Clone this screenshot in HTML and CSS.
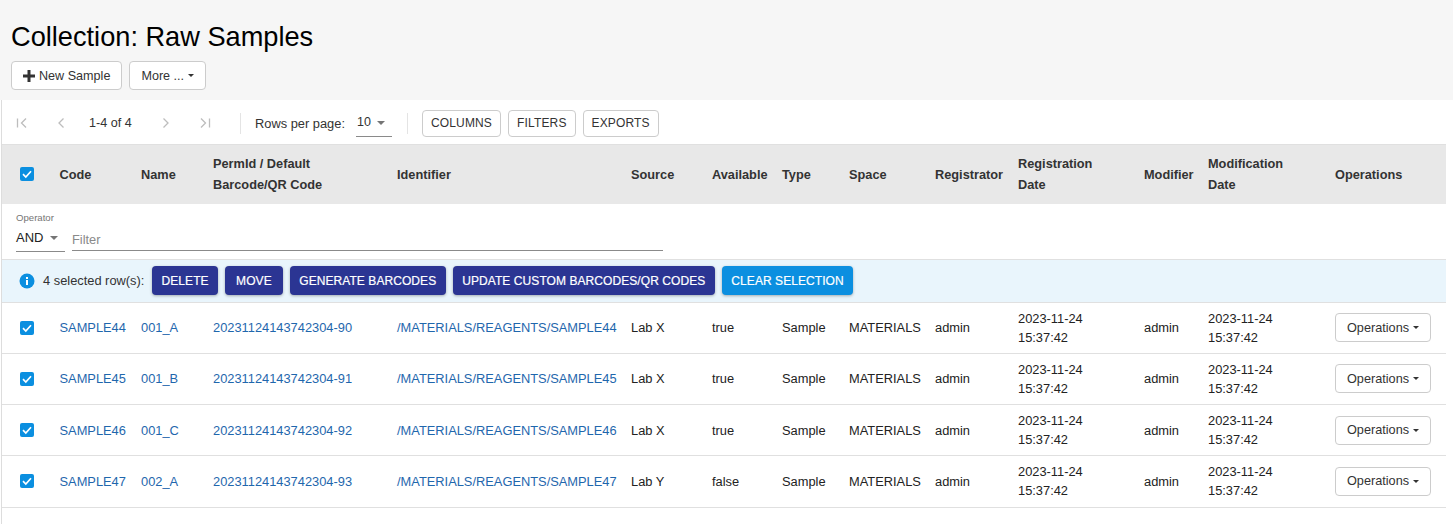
FILE: index.html
```html
<!DOCTYPE html>
<html lang="en">
  <head>
    <meta charset="UTF-8" />
    <title>Collection: Raw Samples</title>
    <link rel="stylesheet" href="styles.css">
  </head>

  <body>
    <!-- Page header -->
    <header class="page-header">
      <h1>Collection: Raw Samples</h1>
      <div class="header-buttons">
        <button class="btn-default"><span class="plus">
          <svg width="12" height="12" viewBox="0 0 12 12"><path d="M4.500 0h3v4.500H12v3H7.500V12h-3V7.500H0v-3h4.500z" fill="#333"/></svg>
        </span>New Sample</button>
        <button class="btn-default">More ...<span class="caret"></span></button>
      </div>
    </header>

    <main class="grid-wrap">
      <!-- Pagination and grid tools -->
      <div class="toolbar">
        <div class="pager">
          <svg class="pager-icon" width="24" height="24" viewBox="0 0 24 24"><path d="M7.500 7.500v9M16 7.500L11.500 12l4.500 4.500" /></svg>
          <svg class="pager-icon" width="24" height="24" viewBox="0 0 24 24"><path d="M14.500 7.500L10 12l4.500 4.500" /></svg>
          <span class="pager-text">1-4 of 4</span>
          <svg class="pager-icon" width="24" height="24" viewBox="0 0 24 24"><path d="M9.500 7.500L14 12l-4.500 4.500" /></svg>
          <svg class="pager-icon" width="24" height="24" viewBox="0 0 24 24"><path d="M8 7.500l4.500 4.500L8 16.500M16.500 7.500v9" /></svg>
        </div>
        <span class="tool-sep"></span>
        <span class="rows-label">Rows per page:</span>
        <span class="rows-select">10<span class="arrow"></span></span>
        <span class="tool-sep"></span>
        <div class="tool-buttons">
          <button class="btn-tool">Columns</button>
          <button class="btn-tool">Filters</button>
          <button class="btn-tool">Exports</button>
        </div>
      </div>

      <table class="grid">
        <colgroup>
          <col class="c-check"><col class="c-code"><col class="c-name"><col class="c-perm"><col class="c-ident"><col class="c-source"><col class="c-avail"><col class="c-type"><col class="c-space"><col class="c-reg"><col class="c-regdate"><col class="c-mod"><col class="c-moddate"><col class="c-ops">
        </colgroup>
        <thead>
          <tr class="head-row">
            <th><span class="check"><svg width="14" height="14" viewBox="0 0 14 14"><path d="M3 7.200l2.800 2.800L11 4.300"/></svg></span></th>
            <th>Code</th>
            <th>Name</th>
            <th>PermId / Default<br>Barcode/QR Code</th>
            <th>Identifier</th>
            <th>Source</th>
            <th>Available</th>
            <th>Type</th>
            <th>Space</th>
            <th>Registrator</th>
            <th>Registration<br>Date</th>
            <th>Modifier</th>
            <th>Modification<br>Date</th>
            <th>Operations</th>
          </tr>
          <!-- Global filter -->
          <tr class="filter-row">
            <th colspan="14">
              <div class="filter-box">
                <div class="operator">
                  <span class="operator-label">Operator</span>
                  <span class="operator-select">AND<span class="arrow"></span></span>
                </div>
                <div class="filter-input">Filter</div>
              </div>
            </th>
          </tr>
          <!-- Selection bar -->
          <tr class="select-row">
            <th colspan="14">
              <div class="select-bar">
                <svg width="16" height="16" viewBox="0 0 16 16"><circle cx="8" cy="8" r="7.500" fill="#0b8fe0"/><rect x="7" y="7" width="2" height="5" fill="#fff"/><rect x="7" y="4" width="2" height="2" fill="#fff"/></svg>
                <span class="select-text">4 selected row(s):</span>
                <button class="btn-action">Delete</button>
                <button class="btn-action btn-move">Move</button>
                <button class="btn-action">Generate Barcodes</button>
                <button class="btn-action">Update Custom Barcodes/QR Codes</button>
                <button class="btn-action btn-clear">Clear Selection</button>
              </div>
            </th>
          </tr>
        </thead>
        <tbody>
          <tr>
            <td><span class="check"><svg width="14" height="14" viewBox="0 0 14 14"><path d="M3 7.200l2.800 2.800L11 4.300"/></svg></span></td>
            <td><a href="#">SAMPLE44</a></td>
            <td><a href="#">001_A</a></td>
            <td><a href="#">20231124143742304-90</a></td>
            <td><a href="#">/MATERIALS/REAGENTS/SAMPLE44</a></td>
            <td>Lab X</td>
            <td>true</td>
            <td>Sample</td>
            <td>MATERIALS</td>
            <td>admin</td>
            <td>2023-11-24<br>15:37:42</td>
            <td>admin</td>
            <td>2023-11-24<br>15:37:42</td>
            <td><button class="btn-default">Operations<span class="caret"></span></button></td>
          </tr>
          <tr>
            <td><span class="check"><svg width="14" height="14" viewBox="0 0 14 14"><path d="M3 7.200l2.800 2.800L11 4.300"/></svg></span></td>
            <td><a href="#">SAMPLE45</a></td>
            <td><a href="#">001_B</a></td>
            <td><a href="#">20231124143742304-91</a></td>
            <td><a href="#">/MATERIALS/REAGENTS/SAMPLE45</a></td>
            <td>Lab X</td>
            <td>true</td>
            <td>Sample</td>
            <td>MATERIALS</td>
            <td>admin</td>
            <td>2023-11-24<br>15:37:42</td>
            <td>admin</td>
            <td>2023-11-24<br>15:37:42</td>
            <td><button class="btn-default">Operations<span class="caret"></span></button></td>
          </tr>
          <tr>
            <td><span class="check"><svg width="14" height="14" viewBox="0 0 14 14"><path d="M3 7.200l2.800 2.800L11 4.300"/></svg></span></td>
            <td><a href="#">SAMPLE46</a></td>
            <td><a href="#">001_C</a></td>
            <td><a href="#">20231124143742304-92</a></td>
            <td><a href="#">/MATERIALS/REAGENTS/SAMPLE46</a></td>
            <td>Lab X</td>
            <td>true</td>
            <td>Sample</td>
            <td>MATERIALS</td>
            <td>admin</td>
            <td>2023-11-24<br>15:37:42</td>
            <td>admin</td>
            <td>2023-11-24<br>15:37:42</td>
            <td><button class="btn-default">Operations<span class="caret"></span></button></td>
          </tr>
          <tr>
            <td><span class="check"><svg width="14" height="14" viewBox="0 0 14 14"><path d="M3 7.200l2.800 2.800L11 4.300"/></svg></span></td>
            <td><a href="#">SAMPLE47</a></td>
            <td><a href="#">002_A</a></td>
            <td><a href="#">20231124143742304-93</a></td>
            <td><a href="#">/MATERIALS/REAGENTS/SAMPLE47</a></td>
            <td>Lab Y</td>
            <td>false</td>
            <td>Sample</td>
            <td>MATERIALS</td>
            <td>admin</td>
            <td>2023-11-24<br>15:37:42</td>
            <td>admin</td>
            <td>2023-11-24<br>15:37:42</td>
            <td><button class="btn-default">Operations<span class="caret"></span></button></td>
          </tr>
        </tbody>
      </table>
    </main>
  </body>
</html>
```

FILE: styles.css
```css
* {
  box-sizing: border-box;
}

body {
  margin: 0;
  height: 524px;
  overflow: hidden;
  font-family: "Liberation Sans", Arial, sans-serif;
  font-size: 12px;
  color: #222;
  background-color: #fff;
}

button {
  font-family: inherit;
  cursor: pointer;
}

.page-header {
  height: 100px;
  padding: 21px 11px 0;
  background-color: #f6f6f6;
}

h1 {
  margin: 0 0 8px;
  font-size: 27.200px;
  font-weight: 400;
  line-height: 32px;
  color: #000;
}

.header-buttons {
  display: flex;
  gap: 7px;
}

.btn-default {
  display: inline-flex;
  align-items: center;
  height: 29px;
  padding: 0 11px;
  font-size: 12.700px;
  color: #333;
  background-color: #fff;
  border: 1px solid #ccc;
  border-radius: 4px;
}

.header-buttons .btn-default {
  font-size: 12.600px;
}

.plus {
  display: inline-flex;
  margin-right: 4px;
}

.caret {
  width: 0;
  height: 0;
  margin-left: 4px;
  border-top: 3px solid #333;
  border-left: 3px solid transparent;
  border-right: 3px solid transparent;
}

.grid-wrap {
  height: 424px;
  margin-left: 1px;
  border-left: 1px solid #ddd;
}

.toolbar {
  display: flex;
  align-items: center;
  height: 44px;
  padding: 2px 0 0 8px;
}

.pager {
  display: flex;
  align-items: center;
  width: 230px;
}

.pager-icon {
  flex: none;
  margin-right: 15px;
  fill: none;
  stroke: #bdbdbd;
  stroke-width: 1.300;
}

.pager-text {
  width: 65px;
  margin-left: 1px;
  font-size: 12.600px;
  color: #333;
}

.tool-sep {
  width: 1px;
  height: 21px;
  margin-right: 14px;
  background-color: #e4e4e4;
}

.rows-label {
  font-size: 12.850px;
  color: #333;
}

.rows-select {
  display: flex;
  align-items: center;
  width: 36px;
  height: 27px;
  margin: 0 15px 0 11px;
  padding: 0 0 2px 1px;
  font-size: 12.500px;
  color: #333;
  border-bottom: 1px solid #8a8a8a;
}

.arrow {
  width: 0;
  height: 0;
  margin: 2px 0 0 6px;
  border-top: 4.500px solid #757575;
  border-left: 4.500px solid transparent;
  border-right: 4.500px solid transparent;
}

.tool-buttons {
  display: flex;
  gap: 7px;
}

.btn-tool {
  height: 27px;
  padding: 0 8px;
  font-size: 12px;
  letter-spacing: 0.150px;
  text-transform: uppercase;
  color: #333;
  background-color: #fff;
  border: 1px solid #ccc;
  border-radius: 4px;
}

.grid {
  width: 1444px;
  table-layout: fixed;
  border-collapse: collapse;
}

.c-check { width: 56.500px; }
.c-code { width: 81.500px; }
.c-name { width: 72px; }
.c-perm { width: 184px; }
.c-ident { width: 234px; }
.c-source { width: 81px; }
.c-avail { width: 70px; }
.c-type { width: 67px; }
.c-space { width: 86px; }
.c-reg { width: 83px; }
.c-regdate { width: 126px; }
.c-mod { width: 64px; }
.c-moddate { width: 127px; }
.c-ops { width: 112px; }

th,
td {
  padding: 0 0 0 1px;
  text-align: left;
  font-size: 12.850px;
  line-height: 21px;
}

.head-row th {
  height: 59px;
  font-size: 12.750px;
  font-weight: 700;
  color: #333;
  background-color: #e8e8e8;
  border-top: 1px solid #e0e0e0;
}

.head-row th:first-child,
tbody td:first-child {
  padding-left: 18px;
}

.check {
  display: flex;
  align-items: center;
  justify-content: center;
  width: 14px;
  height: 14px;
  background-color: #0b8fe0;
  border-radius: 2px;
}

.check path {
  fill: none;
  stroke: #fff;
  stroke-width: 1.700;
}

.filter-row th {
  height: 55px;
  padding: 0;
  font-weight: 400;
}

.filter-box {
  display: flex;
  align-items: flex-end;
  height: 55px;
  padding: 0 0 8px 14px;
}

.operator {
  width: 49px;
  margin: 0 7px -1px 0;
}

.operator-label {
  display: block;
  font-size: 9.600px;
  line-height: 11px;
  color: #757575;
}

.operator-select {
  display: flex;
  align-items: center;
  height: 29px;
  padding-top: 2px;
  font-size: 13px;
  color: #222;
  border-bottom: 1px solid #8a8a8a;
}

.operator-select .arrow {
  margin: 0 0 0 7px;
}

.filter-input {
  width: 591px;
  height: 25px;
  padding-top: 5px;
  font-size: 12.850px;
  line-height: 18px;
  color: #8a8a8a;
  border-bottom: 1px solid #8a8a8a;
}

.select-row th {
  padding: 0;
  font-weight: 400;
  border-top: 1px solid #e0e0e0;
  border-bottom: 1px solid #e0e0e0;
}

.select-bar {
  display: flex;
  align-items: center;
  height: 42px;
  padding-left: 17px;
  background-color: #e9f5fc;
}

.select-text {
  width: 109px;
  margin-left: 8px;
  font-size: 12.850px;
  color: #333;
}

.btn-action {
  height: 29px;
  margin-right: 7px;
  padding: 0 9.500px;
  font-size: 12px;
  letter-spacing: 0.070px;
  text-transform: uppercase;
  color: #fff;
  background-color: #2b3593;
  border: none;
  border-radius: 4px;
  box-shadow: 0 1px 3px rgba(0, 0, 0, 0.3);
  -webkit-text-stroke: 0.200px #fff;
}

.btn-move {
  padding: 0 11px;
}

.btn-clear {
  background-color: #0b8fe0;
}

tbody tr {
  height: 51.250px;
  border-bottom: 1px solid #e0e0e0;
}

td {
  line-height: 19px;
  color: #222;
}

a {
  color: #1f67ad;
  text-decoration: none;
}
```
